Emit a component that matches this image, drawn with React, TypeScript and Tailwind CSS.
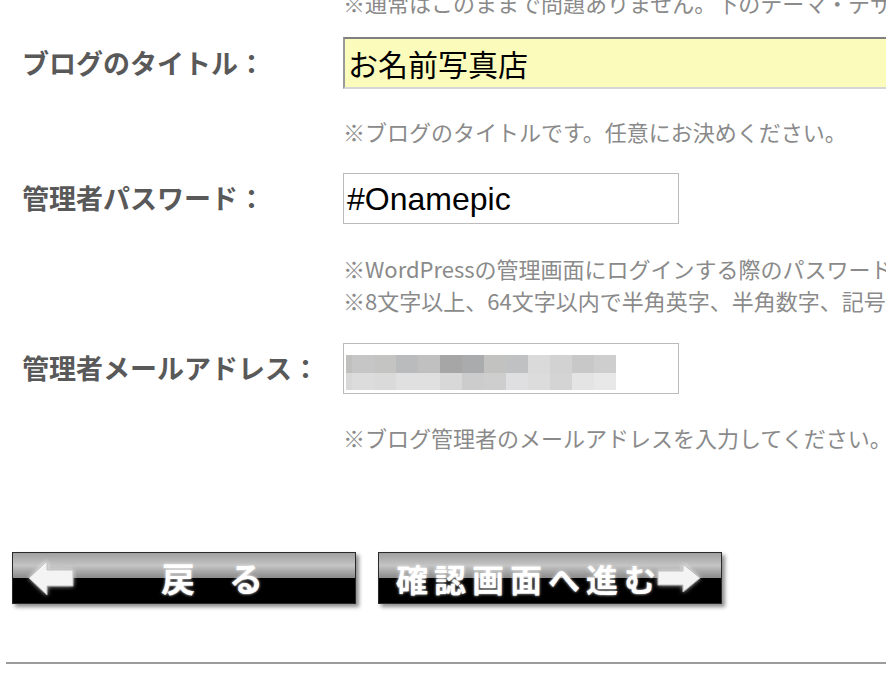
import React from 'react';

const jp = '[font-family:"Noto_Sans_CJK_JP","Noto_Sans",sans-serif]';

const mosaicTop = ['#c0c0be', '#c6c6c6', '#c4c4c2', '#babbbd', '#c0c0c0', '#a6a6a6', '#aaabad', '#c2c2c0', '#c0c1c3', '#dadada', '#d2d2d2', '#c8c8c8', '#cecece'];
const mosaicBottom = ['#d8d8d8', '#dcdcdc', '#dadada', '#e0e0e0', '#e0e0e0', '#d8d8d8', '#cccccc', '#cecece', '#dfdfe1', '#dcdcdc', '#d4d4d4', '#e4e4e4', '#e8e8e8'];

function Label({ children }: { children: React.ReactNode }) {
  return (
    <div className={`w-[343px] shrink-0 pl-[22px] text-[27px] font-bold text-[#595959] whitespace-nowrap ${jp}`}>
      {children}
    </div>
  );
}

function Note({ lines, className = '' }: { lines: string[]; className?: string }) {
  return (
    <div className={`ml-[343px] text-[22px] leading-[32px] text-[#8a8a8a] whitespace-nowrap ${jp} ${className}`}>
      {lines.map((l) => (
        <div key={l}>{l}</div>
      ))}
    </div>
  );
}

function MosaicRow({ colors, h }: { colors: string[]; h: string }) {
  return (
    <div className={`flex ${h}`}>
      {colors.map((c, i) => (
        <div key={i} className={i === 0 ? 'w-[6px]' : 'w-[22px]'} style={{ background: c }} />
      ))}
    </div>
  );
}

function ArrowLeft() {
  return (
    <svg width="48" height="36" viewBox="0 0 48 36" className="[filter:drop-shadow(0_0_2px_rgba(255,255,255,0.7))]">
      <path d="M2 18 L20 1 L20 10 L46 10 L46 26 L20 26 L20 35 Z" fill="#f4f4f4" stroke="#bdbdbd" strokeWidth="1" />
    </svg>
  );
}

function ArrowRight() {
  return (
    <svg width="46" height="32" viewBox="0 0 46 32" className="[filter:drop-shadow(0_0_2px_rgba(255,255,255,0.7))]">
      <path d="M2 9 L27 9 L27 2 L44 16 L27 30 L27 23 L2 23 Z" fill="#f4f4f4" stroke="#bdbdbd" strokeWidth="1" />
    </svg>
  );
}

function NavButton({ width, children }: { width: string; children: React.ReactNode }) {
  return (
    <button className={`relative ${width} h-[52px] border border-[#2a2a2a] shadow-[3px_3px_4px_rgba(0,0,0,0.45)] overflow-hidden`}>
      <div className="flex flex-col h-full">
        <div className="h-[25px] bg-linear-to-b from-[#a0a0a0] via-[#c4c4c4] to-[#8a8a8a]" />
        <div className="flex-1 bg-black" />
      </div>
      <div className="absolute inset-0 flex items-center">{children}</div>
    </button>
  );
}

export default function App() {
  return (
    <div className="w-[886px] h-[676px] overflow-hidden bg-white">
      <div className="flex flex-col">
        <Note className="-mt-[14px]" lines={['※通常はこのままで問題ありません。下のテーマ・デザインは後から変更できます。']} />

        {/* ブログのタイトル */}
        <div className="flex items-center mt-[19px]">
          <Label>ブログのタイトル：</Label>
          <div className={`w-[600px] h-[52px] shrink-0 flex items-center pl-[3px] bg-[#fbfcbb] border-2 border-t-[#7f7f7f] border-l-[#999999] border-b-[#d6d6d6] border-r-[#d6d6d6] text-[30px] text-black ${jp}`}>
            お名前写真店
          </div>
        </div>
        <Note className="mt-[26px]" lines={['※ブログのタイトルです。任意にお決めください。']} />

        {/* 管理者パスワード */}
        <div className="flex items-center mt-[26px]">
          <Label>管理者パスワード：</Label>
          <div className='w-[336px] h-[51px] flex items-center pl-[3px] border border-[#bbbbbb] text-[32px] text-black [font-family:"Liberation_Sans",Arial,sans-serif]'>
            #Onamepic
          </div>
        </div>
        <Note
          className="mt-[28px]"
          lines={[
            '※WordPressの管理画面にログインする際のパスワードです。',
            '※8文字以上、64文字以内で半角英字、半角数字、記号を組み合わせてください。',
          ]}
        />

        {/* 管理者メールアドレス */}
        <div className="flex items-center mt-[27px]">
          <Label>管理者メールアドレス：</Label>
          <div className="w-[336px] h-[51px] border border-[#bbbbbb] pt-[11px] pl-[2px]">
            <MosaicRow colors={mosaicTop} h="h-[18px]" />
            <MosaicRow colors={mosaicBottom} h="h-[17px]" />
          </div>
        </div>
        <Note className="mt-[27px]" lines={['※ブログ管理者のメールアドレスを入力してください。']} />

        {/* buttons */}
        <div className="flex gap-[22px] ml-[12px] mt-[99px]">
          <NavButton width="w-[344px]">
            <div className="pl-[14px]">
              <ArrowLeft />
            </div>
            <span className={`ml-[86px] text-[34px] font-bold text-white leading-none [text-shadow:0_0_3px_rgba(255,255,255,0.9),0_0_1px_#777] ${jp}`}>
              戻　る
            </span>
          </NavButton>
          <NavButton width="w-[344px]">
            <span className={`ml-[17px] text-[32px] font-bold text-white leading-none tracking-[6px] [text-shadow:0_0_3px_rgba(255,255,255,0.9),0_0_1px_#777] ${jp}`}>
              確認画面へ進む
            </span>
            <div className="-ml-[6px]">
              <ArrowRight />
            </div>
          </NavButton>
        </div>

        <div className="ml-[6px] mt-[58px] h-[2px] bg-[#9c9c9c]" />
      </div>
    </div>
  );
}
